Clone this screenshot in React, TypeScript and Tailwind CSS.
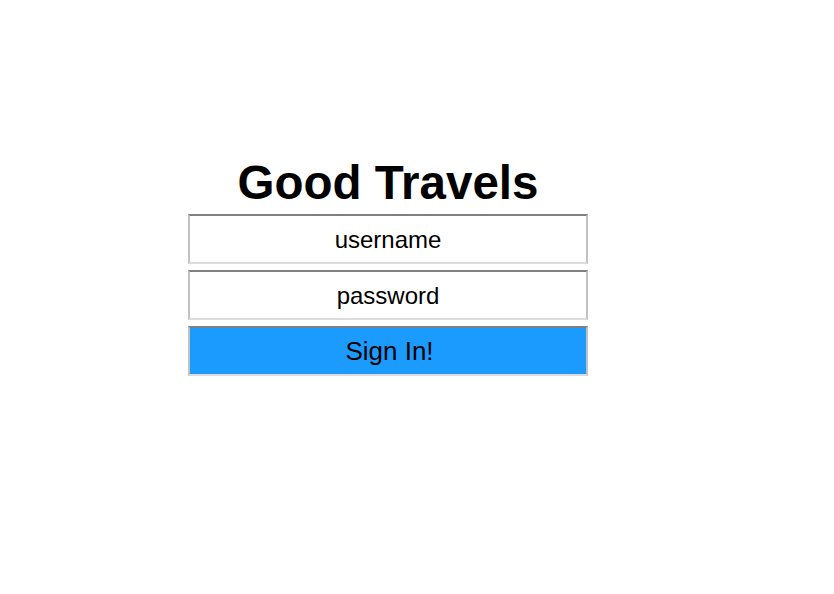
export default function App() {
  return (
    <div className="min-h-[594px] bg-white pt-[155px] pl-[188px]" style={{ fontFamily: '"Liberation Sans", Arial, sans-serif' }}>
      <form className="flex w-[400px] flex-col" onSubmit={(e) => e.preventDefault()}>
        <h1 className="text-center text-[47.5px] font-bold leading-[55px] text-black">Good Travels</h1>
        <input
          type="text"
          placeholder="username"
          className="mt-[4px] h-[50px] w-full border-2 border-t-[#7f7f7f] border-x-[#c2c2c2] border-b-[#dcdcdc] bg-white pt-[2px] text-center text-[24px] text-black outline-none placeholder:text-black"
        />
        <input
          type="password"
          placeholder="password"
          className="mt-[6px] h-[50px] w-full border-2 border-t-[#7f7f7f] border-x-[#c2c2c2] border-b-[#dcdcdc] bg-white pt-[2px] text-center text-[24px] text-black outline-none placeholder:text-black"
        />
        <button
          type="submit"
          className="mt-[6px] h-[50px] w-full border-2 border-t-[#7f7f7f] border-x-[#c2c2c2] border-b-[#dcdcdc] bg-[#1c9bfe] pl-[3px] text-center text-[26px] text-black"
        >
          Sign In!
        </button>
      </form>
    </div>
  );
}
